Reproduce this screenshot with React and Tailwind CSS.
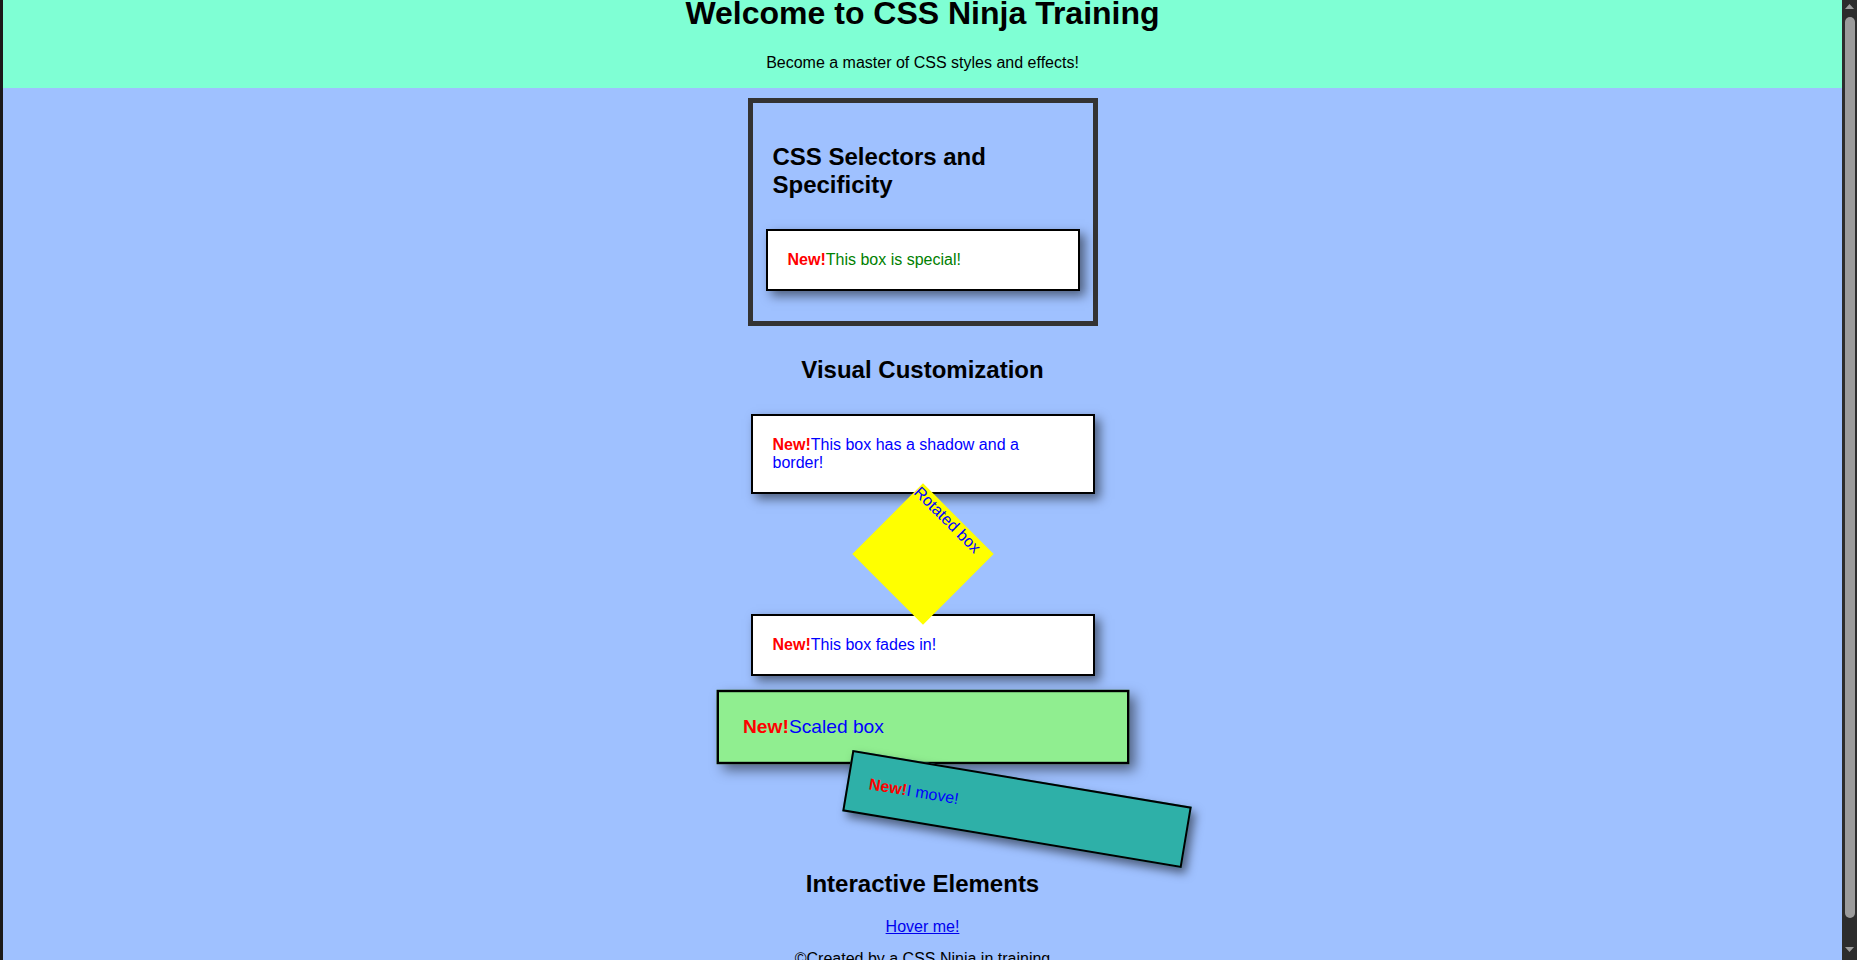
import React from "react";

function New() {
  return <strong className="font-bold text-[#ff0000]">New!</strong>;
}

function Box({ children, className }) {
  return (
    <div
      className={`border-2 border-black p-[20px] text-[16px] leading-[normal] shadow-[5px_5px_10px_rgba(0,0,0,0.5)] ${className}`}
    >
      <New />
      {children}
    </div>
  );
}

function Scrollbar() {
  return (
    <div className="flex w-[15px] shrink-0 flex-col items-center bg-[#2c2c2c]">
      <svg width="9" height="6" viewBox="0 0 9 6" className="mt-[4px]">
        <path d="M4.5 0 L9 5 L0 5 Z" fill="#9b9b9b" />
      </svg>
      <div className="mt-[7px] w-[10px] flex-1 rounded-full bg-[#9b9b9b]" />
      <svg width="9" height="6" viewBox="0 0 9 6" className="mb-[7px] mt-[29px]">
        <path d="M0 0 L9 0 L4.5 5 Z" fill="#9b9b9b" />
      </svg>
    </div>
  );
}

export default function App() {
  return (
    <div className="flex h-[960px] overflow-hidden bg-[#9fc1ff] font-['Liberation_Sans',Arial,sans-serif] text-black">
      <div className="w-[3px] shrink-0 bg-[#1a1a1a]" />

      <div className="flex min-w-0 flex-1 flex-col">
        <header className="h-[88px] shrink-0 bg-[#7fffd4] text-center">
          <h1 className="mt-[-5px] text-[32px] font-bold leading-[37px]">Welcome to CSS Ninja Training</h1>
          <p className="mt-[22px] text-[16px] leading-[normal]">Become a master of CSS styles and effects!</p>
        </header>

        <main className="flex flex-col items-center">
          {/* selectors */}
          <section className="mt-[10px] flex w-[350px] flex-col border-[5px] border-[#333333] p-[20px]">
            <h2 className="mt-[20px] text-[24px] font-bold leading-[normal]">CSS Selectors and Specificity</h2>
            <Box className="mb-[10px] mt-[30px] w-[314px] self-center bg-white text-[#008000]">
              This box is special!
            </Box>
          </section>

          {/* visual */}
          <section className="mt-[10px] flex w-[344px] flex-col items-center">
            <h2 className="mt-[20px] text-[24px] font-bold leading-[normal]">Visual Customization</h2>
            <Box className="mb-[10px] mt-[30px] w-[344px] bg-white text-[#0000ff]">
              This box has a shadow and a border!
            </Box>
            <div className="h-[100px] w-[100px] rotate-45 bg-[#ffff00] text-[16px] leading-[normal] text-[#0000ff]">
              Rotated box
            </div>
            <Box className="my-[10px] w-[344px] bg-white text-[#0000ff]">This box fades in!</Box>
            <Box className="my-[10px] w-[344px] scale-[1.2] bg-[#90ee90] text-[#0000ff]">Scaled box</Box>
            <Box className="my-[10px] w-[344px] translate-x-[94px] rotate-[9.5deg] bg-[#2eb0a8] text-[#0000ff]">
              I move!
            </Box>
          </section>

          {/* interactive */}
          <section className="mt-[20px] text-center">
            <h2 className="text-[24px] font-bold leading-[normal]">Interactive Elements</h2>
            <p className="mt-[20px] text-[16px] leading-[normal]">
              <a href="#" className="text-[#0000ee] underline">
                Hover me!
              </a>
            </p>
          </section>

          <footer className="mt-[14px] text-center text-[16px] leading-[normal]">
            <p>©Created by a CSS Ninja in training</p>
          </footer>
        </main>
      </div>

      <Scrollbar />
    </div>
  );
}
